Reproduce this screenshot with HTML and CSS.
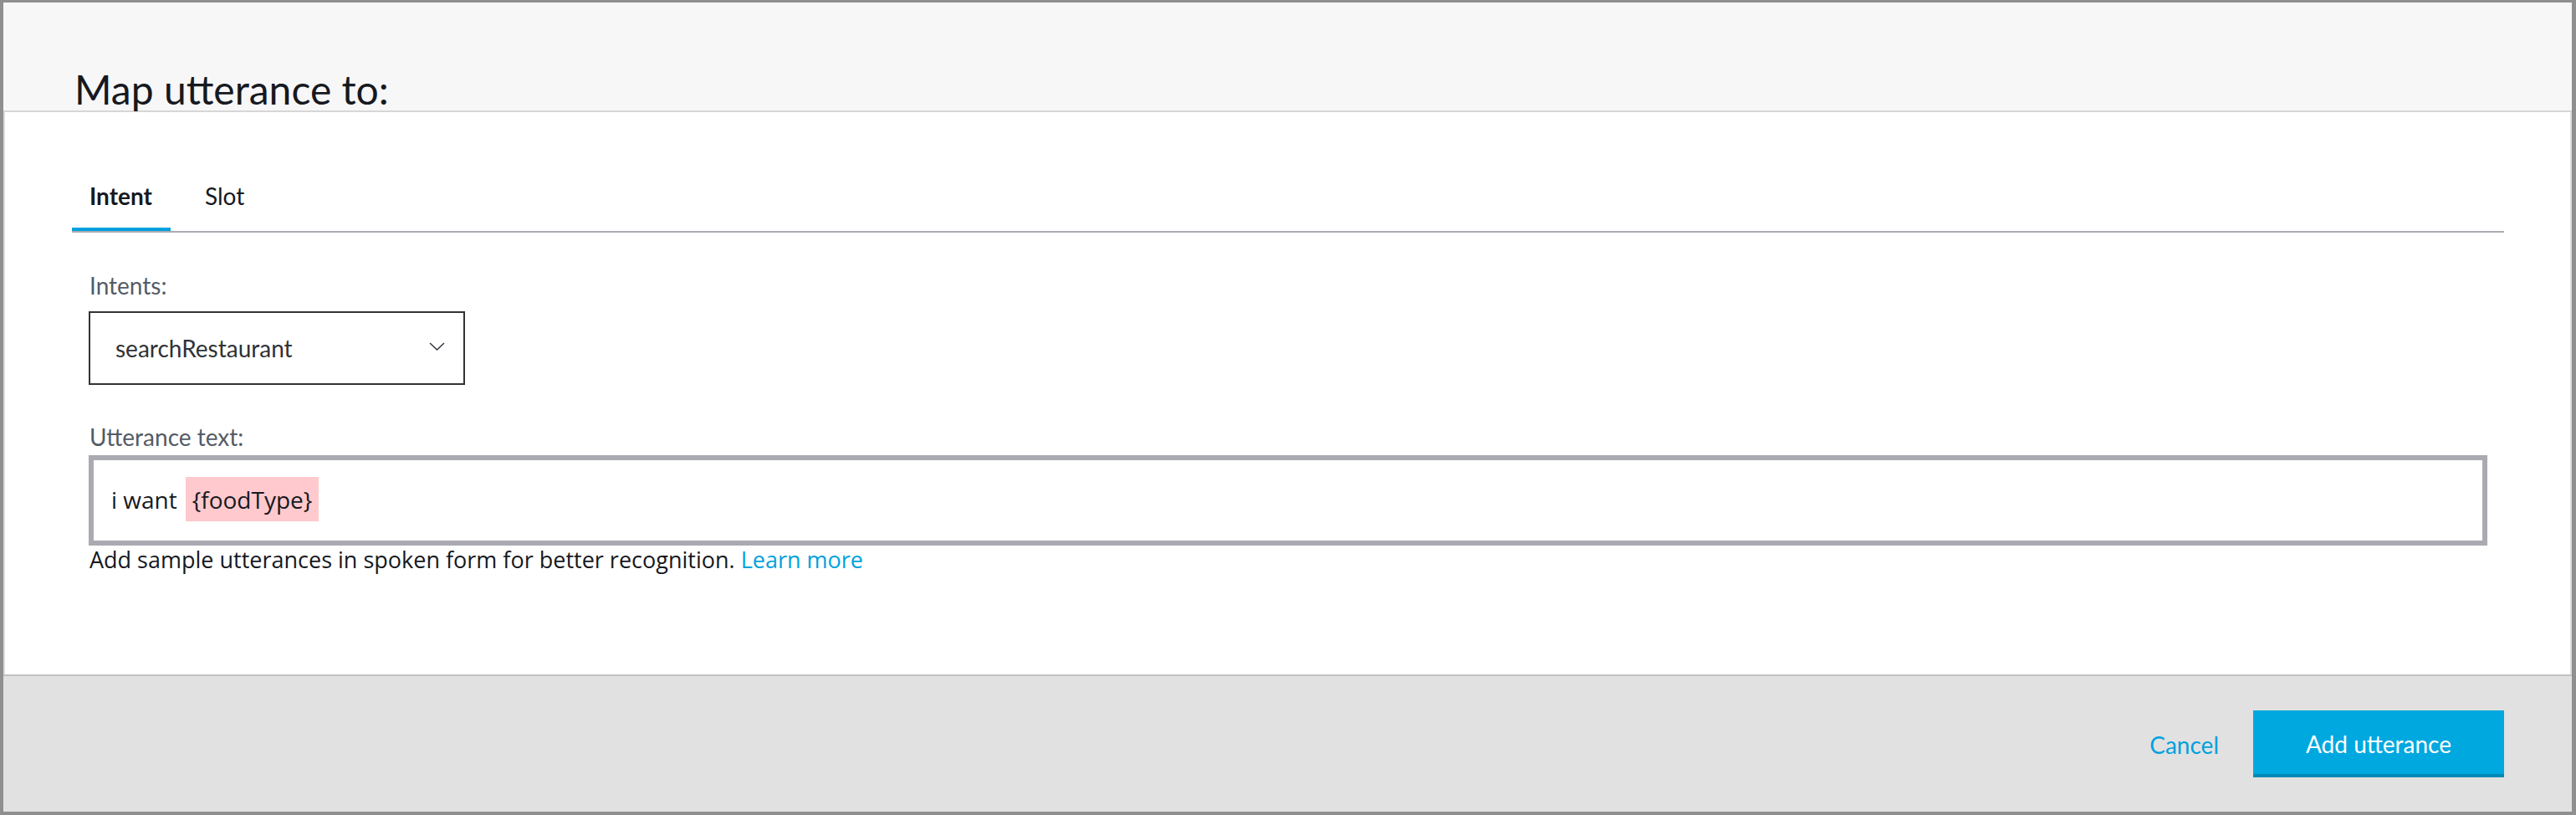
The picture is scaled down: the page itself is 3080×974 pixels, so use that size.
FILE: index.html
```html
<!DOCTYPE html>
<html lang="en">
<head>
<meta charset="utf-8">
<title>Map utterance to</title>
<link rel="stylesheet" href="styles.css">
</head>
<body>
<div class="dialog">
  <div class="dialog-header">
    <h1 class="dialog-title">Map utterance to:</h1>
  </div>
  <div class="dialog-body">
    <div class="tabs">
      <div class="tab tab-active">Intent</div>
      <div class="tab">Slot</div>
    </div>
    <div class="form">
      <div class="field-label label-intents">Intents:</div>
      <div class="select">
        <span class="select-value">searchRestaurant</span>
        <svg class="chevron" width="19" height="10" viewBox="0 0 19 10"><polyline points="1,1 9.5,9 18,1" fill="none" stroke="#2f3237" stroke-width="1.4"/></svg>
      </div>
      <div class="field-label label-utterance">Utterance text:</div>
      <div class="utterance-input">i want<span class="slot-chip">{foodType}</span></div>
      <div class="helper">Add sample utterances in spoken form for better recognition. <a class="link" href="#">Learn more</a></div>
    </div>
  </div>
  <div class="dialog-footer">
    <a class="cancel" href="#">Cancel</a>
    <button class="primary">Add utterance</button>
  </div>
</div>
</body>
</html>
```

FILE: styles.css
```css
html, body {
  margin: 0;
  height: 100%;
}
body {
  box-sizing: border-box;
  padding: 3px 5px 4px 4px;
  background: #8f8f8f;
  font-family: Lato, "Open Sans", "Liberation Sans", sans-serif;
  color: #16191f;
}
.dialog {
  display: flex;
  flex-direction: column;
  height: 967px;
  background: #ffffff;
}
.dialog-header {
  height: 129px;
  background: #f7f7f7;
  border-bottom: 2px solid #d6d6d6;
  padding-left: 85px;
  flex: none;
}
.dialog-title {
  margin: 0;
  padding-top: 80px;
  font-size: 48px;
  line-height: 48px;
  font-weight: 400;
  color: #16191f;
}
.dialog-body {
  flex: 1;
  background: #ffffff;
  border-left: 2px solid #dcdcdc;
  border-right: 2px solid #dcdcdc;
  padding: 63px 79px 0 80px;
}
.tabs {
  display: flex;
  gap: 20px;
  border-bottom: 2px solid #aaabb3;
}
.tab {
  padding: 20px 22px 21px 21px;
  font-size: 28px;
  line-height: 34px;
  color: #16191f;
  border-bottom: 4px solid transparent;
}
.tab-active {
  font-weight: 700;
  border-bottom-color: #00a1de;
}
.form {
  padding: 0 20px;
}
.field-label {
  font-size: 28px;
  line-height: 34px;
  color: #545b64;
  padding-left: 1px;
}
.label-intents {
  margin-top: 46px;
}
.select {
  margin-top: 14px;
  width: 394px;
  height: 84px;
  border: 2px solid #333333;
  display: flex;
  align-items: center;
  justify-content: space-between;
  padding: 0 22px 0 30px;
  box-sizing: content-box;
}
.select-value {
  font-size: 28px;
  line-height: 34px;
  color: #2f3237;
}
.chevron {
  display: block;
  margin-top: -4px;
}
.label-utterance {
  margin-top: 45px;
}
.utterance-input {
  margin-top: 5px;
  border: 6px solid #aaaab2;
  box-sizing: content-box;
  padding: 20px 22px 0 21px;
  height: 76px;
  font-family: "Open Sans", "Noto Sans", sans-serif;
  font-size: 28px;
  line-height: 53px;
  color: #16191f;
}
.slot-chip {
  display: inline-block;
  margin-left: 10px;
  padding: 9.5px 8px;
  line-height: 34px;
  background: #ffc9cd;
  vertical-align: baseline;
}
.helper {
  margin-top: 1px;
  font-family: "Open Sans", "Noto Sans", sans-serif;
  font-size: 27px;
  line-height: 32px;
  padding-left: 1px;
  color: #16191f;
}
.link {
  color: #00a1de;
  text-decoration: none;
}
.dialog-footer {
  flex: none;
  height: 162px;
  background: #e1e1e1;
  border-top: 2px solid #c2c2c2;
  display: flex;
  justify-content: flex-end;
  align-items: center;
  padding-right: 81px;
}
.cancel {
  font-size: 28px;
  line-height: 34px;
  color: #00a1de;
  text-decoration: none;
  margin-right: 41px;
  margin-top: 2px;
}
.primary {
  width: 300px;
  height: 80px;
  background: #00a8e0;
  border: none;
  border-bottom: 4px solid #0089b7;
  color: #ffffff;
  font-family: Lato, "Open Sans", "Liberation Sans", sans-serif;
  font-size: 28px;
  line-height: 34px;
  padding: 4px 0 0;
  cursor: pointer;
}
```
